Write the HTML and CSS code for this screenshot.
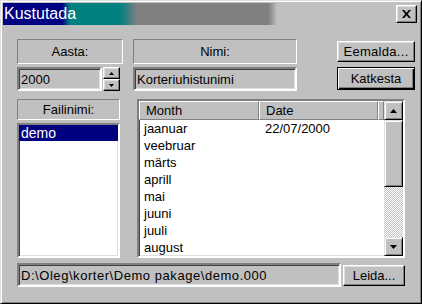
FILE: index.html
```html
<!DOCTYPE html>
<html>
<head>
<meta charset="utf-8">
<link rel="stylesheet" href="styles.css">
</head>
<body>
<div class="window">
  <div class="titlebar">
    <span class="title">Kustutada</span>
    <div class="close">
      <svg width="9" height="8" viewBox="0 0 9 8"><path d="M0 0h2.2L4.5 2.7 6.8 0H9L5.7 4 9 8H6.8L4.5 5.3 2.2 8H0l3.3-4z"/></svg>
    </div>
  </div>
  <div class="content">
    <div class="top-grid">
      <div class="label">Aasta:</div>
      <div class="label">Nimi:</div>
      <div class="btn btn-eemalda">Eemalda...</div>
      <div class="spin">
        <div class="field">2000</div>
        <div class="spin-btns">
          <div class="sbtn"><svg width="5" height="3" viewBox="0 0 5 3"><path d="M2.5 0L5 3H0z"/></svg></div>
          <div class="sbtn"><svg width="5" height="3" viewBox="0 0 5 3"><path d="M0 0h5L2.5 3z"/></svg></div>
        </div>
      </div>
      <div class="field">Korteriuhistunimi</div>
      <div class="btn btn-default">Katkesta</div>
    </div>
    <div class="mid">
      <div class="left">
        <div class="label label-small">Failinimi:</div>
        <div class="listbox"><div class="lb-item selected">demo</div></div>
      </div>
      <div class="lv">
        <div class="lv-main">
          <div class="lv-header">
            <div class="hcell hc-month">Month</div>
            <div class="hcell hc-date">Date</div>
            <div class="hcell hc-rest"></div>
          </div>
          <div class="lv-row"><span class="c-month">jaanuar</span><span class="c-date">22/07/2000</span></div>
          <div class="lv-row"><span class="c-month">veebruar</span></div>
          <div class="lv-row"><span class="c-month">märts</span></div>
          <div class="lv-row"><span class="c-month">aprill</span></div>
          <div class="lv-row"><span class="c-month">mai</span></div>
          <div class="lv-row"><span class="c-month">juuni</span></div>
          <div class="lv-row"><span class="c-month">juuli</span></div>
          <div class="lv-row"><span class="c-month">august</span></div>
        </div>
        <div class="vscroll">
          <div class="sb-btn"><svg width="7" height="4" viewBox="0 0 7 4"><path d="M3.5 0L7 4H0z"/></svg></div>
          <div class="sb-thumb"></div>
          <div class="sb-track"></div>
          <div class="sb-btn"><svg width="7" height="4" viewBox="0 0 7 4"><path d="M0 0h7L3.5 4z"/></svg></div>
        </div>
      </div>
    </div>
    <div class="bottom">
      <div class="field path">D:\Oleg\korter\Demo pakage\demo.000</div>
      <div class="btn btn-leida">Leida...</div>
    </div>
  </div>
</div>
</body>
</html>
```

FILE: styles.css
```css
html, body {
  margin: 0;
  padding: 0;
  background: #c0c0c0;
}

.window {
  width: 422px;
  height: 304px;
  box-sizing: border-box;
  background: #c0c0c0;
  border: 1px solid;
  border-color: #dfdfdf #000 #000 #dfdfdf;
  box-shadow: inset 1px 1px #fff, inset -1px -1px #808080;
  padding: 2px;
  font-family: "Liberation Sans", Arial, sans-serif;
  font-size: 13px;
  color: #000;
}

.titlebar {
  display: flex;
  align-items: center;
  height: 22px;
  background: linear-gradient(90deg,
    #000080 0, #000080 59px, #004080 63px, #008080 67px,
    #008080 117px, #408080 126px, #808080 134px,
    #808080 265px, #a0a0a0 270px, #c0c0c0 274px, #c0c0c0 100%);
}

.title {
  color: #fff;
  font-size: 16px;
  padding-left: 1px;
  line-height: 22px;
}

.close {
  margin-left: auto;
  margin-right: 2px;
  width: 21px;
  height: 18px;
  box-sizing: border-box;
  background: #c0c0c0;
  border: 1px solid;
  border-color: #fff #000 #000 #fff;
  box-shadow: inset -1px -1px #808080, inset 1px 1px #dfdfdf;
  display: flex;
  align-items: center;
  justify-content: center;
  padding-bottom: 1px;
}

.content {
  padding: 14px 0 0 14px;
}

.top-grid {
  display: grid;
  grid-template-columns: 106px 164px 108px;
  grid-template-rows: 25px 24px;
  column-gap: 10px;
  row-gap: 3px;
}

.label {
  box-sizing: border-box;
  border: 1px solid;
  border-color: #808080 #fff #fff #808080;
  display: flex;
  align-items: center;
  justify-content: center;
}

.label-small {
  height: 21px;
}

.btn {
  box-sizing: border-box;
  background: #c0c0c0;
  border: 1px solid;
  border-color: #fff #000 #000 #fff;
  box-shadow: inset -1px -1px #808080, inset 1px 1px #dfdfdf;
  display: flex;
  align-items: center;
  justify-content: center;
}

.btn-eemalda {
  width: 78px;
  height: 21px;
  justify-self: end;
  margin-top: 2px;
  letter-spacing: 0.3px;
}

.btn-default {
  width: 78px;
  height: 23px;
  justify-self: end;
  align-self: start;
  border: 1px solid #000;
  box-shadow: inset 1px 1px #fff, inset -1px -1px #000, inset -2px -2px #808080;
}

.field {
  box-sizing: border-box;
  border: 2px solid;
  border-color: #808080 #fff #fff #808080;
  box-shadow: inset 1px 1px #404040, inset -1px -1px #dfdfdf;
  display: flex;
  align-items: center;
  padding-left: 2px;
  padding-top: 1px;
  white-space: nowrap;
  overflow: hidden;
}

.spin {
  display: flex;
  width: 103px;
}

.spin .field {
  width: 85px;
}

.spin-btns {
  margin-left: 1px;
  width: 17px;
  display: flex;
  flex-direction: column;
}

.sbtn {
  flex: 1;
  box-sizing: border-box;
  border: 1px solid;
  border-color: #fff #000 #000 #fff;
  box-shadow: inset -1px -1px #808080, inset 1px 1px #dfdfdf;
  display: flex;
  align-items: center;
  justify-content: center;
}

.mid {
  display: flex;
  margin-top: 8px;
}

.left {
  width: 103px;
  display: flex;
  flex-direction: column;
}

.listbox {
  margin-top: 3px;
  height: 135px;
  box-sizing: border-box;
  background: #fff;
  border: 2px solid;
  border-color: #808080 #fff #fff #808080;
  box-shadow: inset 1px 1px #404040, inset -1px -1px #dfdfdf;
}

.lb-item {
  height: 16px;
  line-height: 16px;
  padding-left: 2px;
  font-size: 14px;
}

.selected {
  background: #000080;
  color: #fff;
}

.lv {
  margin-left: 17px;
  width: 268px;
  height: 159px;
  box-sizing: border-box;
  background: #fff;
  border: 2px solid;
  border-color: #808080 #fff #fff #808080;
  box-shadow: inset 1px 1px #404040, inset -1px -1px #dfdfdf;
  display: flex;
  overflow: hidden;
}

.lv-main {
  flex: 1;
  overflow: hidden;
}

.lv-header {
  display: flex;
  height: 19px;
}

.hcell {
  box-sizing: border-box;
  background: #c0c0c0;
  border: 1px solid;
  border-color: #fff #808080 #808080 #fff;
  display: flex;
  align-items: center;
  padding-left: 6px;
}

.hc-month { width: 120px; }
.hc-date { width: 119px; }
.hc-rest { flex: 1; padding: 0; }

.lv-row {
  display: flex;
  height: 17px;
  align-items: center;
}

.c-month {
  width: 120px;
  padding-left: 5px;
  box-sizing: border-box;
}

.c-date {
  padding-left: 6px;
}

.vscroll {
  width: 19px;
  display: flex;
  flex-direction: column;
}

.sb-btn {
  height: 19px;
  box-sizing: border-box;
  background: #c0c0c0;
  border: 1px solid;
  border-color: #dfdfdf #000 #000 #dfdfdf;
  box-shadow: inset 1px 1px #fff, inset -1px -1px #808080;
  display: flex;
  align-items: center;
  justify-content: center;
}

.sb-thumb {
  height: 67px;
  box-sizing: border-box;
  background: #c0c0c0;
  border: 1px solid;
  border-color: #dfdfdf #000 #000 #dfdfdf;
  box-shadow: inset 1px 1px #fff, inset -1px -1px #808080;
}

.sb-track {
  flex: 1;
  background: repeating-conic-gradient(#fff 0 25%, #c0c0c0 0 50%) 0 0 / 2px 2px;
}

.bottom {
  display: flex;
  margin-top: 5px;
}

.path {
  width: 324px;
  height: 24px;
  letter-spacing: 0.55px;
}

.btn-leida {
  width: 62px;
  height: 21px;
  margin-left: 2px;
  margin-top: 2px;
}
```
